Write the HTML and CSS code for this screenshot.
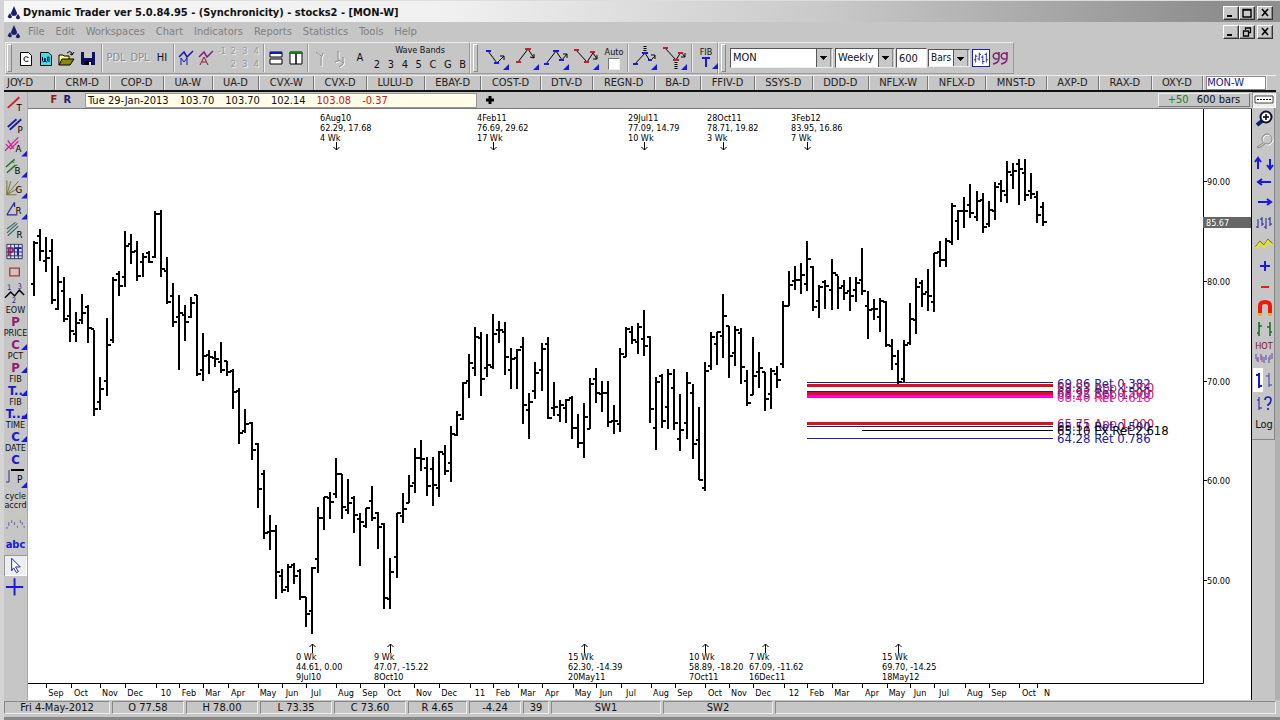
FILE: index.html
```html
<!DOCTYPE html>
<html lang="en">
<head>
	<meta charset="UTF-8">
	<title>Dynamic Trader</title>
	<link rel="stylesheet" href="styles.css">
</head>

<body>

<header class="titlebar">
	<svg class="logo" viewBox="0 0 14 14"><path d="M7 0 L10 7 Q10 10 7 10 Q4 10 4 7Z M3 7 L5 11 Q4 13 2 12 Q0 11 1 10Z M11 8 L13 11 Q13 14 10 13 Q8 12 9 11Z" fill="#1c1c70"/></svg>
	<h1>Dynamic Trader ver 5.0.84.95 - (Synchronicity) - stocks2 - [MON-W]</h1>
	<div class="winbtns">
		<button aria-label="Minimize"><svg viewBox="0 0 12 10"><path d="M2 8h5" stroke="#000" stroke-width="2"/></svg></button>
		<button aria-label="Maximize"><svg viewBox="0 0 12 10"><path d="M2 1.5h8v7.5h-8z M2 2h8" fill="none" stroke="#000" stroke-width="1.4"/></svg></button>
		<button class="close" aria-label="Close"><svg viewBox="0 0 12 10"><path d="M3 1l6 7M9 1l-6 7" stroke="#000" stroke-width="1.6"/></svg></button>
	</div>
</header>

<nav class="menubar">
	<svg class="logo" viewBox="0 0 14 14"><path d="M7 0 L10 7 Q10 10 7 10 Q4 10 4 7Z M3 7 L5 11 Q4 13 2 12 Q0 11 1 10Z M11 8 L13 11 Q13 14 10 13 Q8 12 9 11Z" fill="#1c1c70"/></svg>
	<a href="#">File</a>
	<a href="#">Edit</a>
	<a href="#">Workspaces</a>
	<a href="#">Chart</a>
	<a href="#">Indicators</a>
	<a href="#">Reports</a>
	<a href="#">Statistics</a>
	<a href="#">Tools</a>
	<a href="#">Help</a>
	<div class="winbtns">
		<button aria-label="Minimize chart"><svg viewBox="0 0 12 10"><path d="M2 8h5" stroke="#000" stroke-width="2"/></svg></button>
		<button aria-label="Restore chart"><svg viewBox="0 0 12 10"><path d="M4.5 3V1h5v4.5h-2M2.5 4h5v5h-5z" fill="none" stroke="#000" stroke-width="1.3"/></svg></button>
		<button class="close" aria-label="Close chart"><svg viewBox="0 0 12 10"><path d="M3 1l6 7M9 1l-6 7" stroke="#000" stroke-width="1.6"/></svg></button>
	</div>
</nav>

<div class="toolbar">
	<div class="band band-main">
		<button class="w20" aria-label="New chart"><svg viewBox="0 0 20 20"><path d="M4.500 4.500h8l3 3v10h-11z" fill="#fff" stroke="#000"/><path d="M12.500 9.500q-4.500-2-4.500 1.500t4.500 2" fill="none" stroke="#000"/></svg></button>
		<button class="w20" aria-label="New workspace"><svg viewBox="0 0 20 20"><path d="M4.500 4.500h8l3 3v10h-11z" fill="#3fe0e0" stroke="#000"/><path d="M6.500 9v4q1.500 2 2.500 0v-3v3q1.500 2 2.500 0V9h1.500v5" fill="none" stroke="#005"/></svg></button>
		<button class="w20" aria-label="Open"><svg viewBox="0 0 20 20"><path d="M3 17V7h4l1 1h5v3" fill="#ff7" stroke="#000"/><path d="M3 17l3-6h12l-4 6z" fill="#8a8a10" stroke="#000"/><path d="M11 5q3-3 5 0v2M18 4l-2 3-2-1" fill="none" stroke="#000"/></svg></button>
		<button class="w24" aria-label="Save"><svg viewBox="0 0 20 20"><path d="M3 4h14v13H4l-1-1z" fill="#101060"/><path d="M6 4h8v6H6z" fill="#c8c8c8"/><path d="M7 13h7v4H7z" fill="#000"/><path d="M11 14h2v3h-2z" fill="#ddd"/></svg></button>
		<i class="sep"></i>
		<button class="w24 off">PDL</button>
		<button class="w24 off">DPL</button>
		<button class="w20">HI</button>
		<i class="sep"></i>
		<button class="w20" aria-label="Monthly wave"><svg viewBox="0 0 20 20"><path d="M3 9l5-5 3 5 6-6" fill="none" stroke="#1818b0" stroke-width="1.5"/><path d="M5 17v-7l3 4 3-4v7" fill="none" stroke="#1818b0"/></svg></button>
		<button class="w20" aria-label="Average wave"><svg viewBox="0 0 20 20"><path d="M3 9l5-5 3 5 6-6" fill="none" stroke="#802080" stroke-width="1.5"/><path d="M4 17l4-8 4 8M6 14h4" fill="none" stroke="#a01030"/></svg></button>
		<div class="digits"><span>-1</span><span>2</span><span>3</span><span>4</span><span></span><span>2</span><span>3</span><span>4</span></div>
		<i class="sep"></i>
		<button class="w20" aria-label="Tile horizontally"><svg viewBox="0 0 20 20"><path d="M4 4h12v5H4zM4 11h12v5H4z" fill="#fff" stroke="#000"/><path d="M4 4h12v2H4z" fill="#1818c0"/></svg></button>
		<button class="w20" aria-label="Tile vertically"><svg viewBox="0 0 20 20"><path d="M4 4h6v12H4zM10 4h6v12h-6z" fill="#fff" stroke="#000"/><path d="M4 4h12v2H4z" fill="#108010"/></svg></button>
		<i class="sep"></i>
		<button class="w20" aria-label="Swing up"><svg viewBox="0 0 20 20"><path d="M6 4l5 4M13 5l-2 5v8" fill="none" stroke="#fff" transform="translate(1 1)"/><path d="M6 4l5 4M13 5l-2 5v8" fill="none" stroke="#8c8c8c"/></svg></button>
		<button class="w20" aria-label="Swing down"><svg viewBox="0 0 20 20"><path d="M8 3v9l6 3M5 14l5-2M13 9v7l-4 3" fill="none" stroke="#fff" transform="translate(1 1)"/><path d="M8 3v9l6 3M5 14l5-2M13 9v7l-4 3" fill="none" stroke="#8c8c8c"/></svg></button>
		<button class="w20">A</button>
		<div class="wave">
			<span>Wave Bands</span>
			<div><button>2</button><button>3</button><button>4</button><button>5</button><button>C</button><button>G</button><button>B</button></div>
		</div>
	</div>

	<div class="band band-draw">
		<button class="w30" aria-label="Retracement low"><svg viewBox="0 0 28 24"><path d="M5 5l9 12 7-7M17 10h4v4" fill="none" stroke="#000"/><path d="M3 5h5M11 17h5" stroke="#1818e0" stroke-width="2"/><path d="M26 18v6h-6z" fill="#1818e0"/></svg></button>
		<button class="w30" aria-label="Retracement high"><svg viewBox="0 0 28 24"><path d="M5 16L15 3l6 9M17 11l4 1V8" fill="none" stroke="#000"/><path d="M3 16h5M12 3h6" stroke="#c02030" stroke-width="2"/><path d="M26 18v6h-6z" fill="#1818e0"/></svg></button>
		<button class="w30" aria-label="Projection low"><svg viewBox="0 0 28 24"><path d="M3 18L13 5l6 9 5-6M20 8h4v4" fill="none" stroke="#000"/><path d="M1 18h5M10 5h6M16 14h5" stroke="#1818e0" stroke-width="2"/><path d="M26 18v6h-6z" fill="#1818e0"/></svg></button>
		<button class="w30" aria-label="Projection high"><svg viewBox="0 0 28 24"><path d="M3 4l11 12 6-9 4 6M20 13h4V9" fill="none" stroke="#000"/><path d="M1 4h5M11 16h5M17 6h5" stroke="#c02030" stroke-width="2"/><path d="M26 18v6h-6z" fill="#1818e0"/></svg></button>
		<label class="auto">Auto<input type="checkbox"></label>
		<i class="sep"></i>
		<button class="w30" aria-label="Extension up"><svg viewBox="0 0 28 24"><path d="M4 18L14 7l5 8 5-5M20 9h4v4" fill="none" stroke="#000"/><path d="M14 0v6" stroke="#000" stroke-width="3" stroke-dasharray="1 1"/><path d="M2 18h5M11 7h6M17 14h4" stroke="#1818e0" stroke-width="2"/><path d="M26 18v6h-6z" fill="#1818e0"/></svg></button>
		<button class="w30" aria-label="Extension down"><svg viewBox="0 0 28 24"><path d="M4 2l11 12 5-8 4 5M20 11h4V7" fill="none" stroke="#000"/><path d="M15 16v7" stroke="#000" stroke-width="3" stroke-dasharray="1 1"/><path d="M2 2h5M12 14h6M17 7h5" stroke="#c02030" stroke-width="2"/><path d="M26 18v6h-6z" fill="#1818e0"/></svg></button>
		<i class="sep"></i>
		<button class="w24 fib">FIB<svg viewBox="0 0 24 12"><path d="M8 1h8M12 1v9" stroke="#1818e0" stroke-width="2"/><path d="M24 6v6h-6z" fill="#1818e0"/></svg></button>
	</div>

	<div class="band band-symbol">
		<select class="symbol" aria-label="Symbol"><option>MON</option></select>
		<select class="period" aria-label="Period"><option>Weekly</option></select>
		<input class="count" type="text" value="600" aria-label="Count">
		<select class="unit" aria-label="Unit"><option>Bars</option></select>
		<button class="bars-btn" aria-label="Bar chart"><svg viewBox="0 0 18 18"><path d="M3 5v9M1 11h2M3 7h2M7 3v9M5 10h2M7 5h2M11 6v10M9 8h2M11 13h2M15 3v11M13 5h2M15 11h2" stroke="#1c1c90" fill="none"/></svg></button>
		<button class="quote-btn" aria-label="Quotes"><svg viewBox="0 0 18 18"><path d="M8 6a3 3 0 1 0-1 3.5M8 3v6q0 5-6 6M16 6a3 3 0 1 0-1 3.5M16 3v6q0 5-6 6" fill="none" stroke="#802070" stroke-width="1.5"/></svg></button>
	</div>
</div>

<nav class="tabs">
	<a href="#">JOY-D</a>
	<a href="#">CRM-D</a>
	<a href="#">COP-D</a>
	<a href="#">UA-W</a>
	<a href="#">UA-D</a>
	<a href="#">CVX-W</a>
	<a href="#">CVX-D</a>
	<a href="#">LULU-D</a>
	<a href="#">EBAY-D</a>
	<a href="#">COST-D</a>
	<a href="#">DTV-D</a>
	<a href="#">REGN-D</a>
	<a href="#">BA-D</a>
	<a href="#">FFIV-D</a>
	<a href="#">SSYS-D</a>
	<a href="#">DDD-D</a>
	<a href="#">NFLX-W</a>
	<a href="#">NFLX-D</a>
	<a href="#">MNST-D</a>
	<a href="#">AXP-D</a>
	<a href="#">RAX-D</a>
	<a href="#">OXY-D</a>
	<a href="#" class="active">MON-W</a>
</nav>

<div class="main">
	<div class="side left">
		<button aria-label="Trend line"><svg viewBox="0 0 24 21"><path d="M4 14L16 3" stroke="#d02030" stroke-width="2"/><text x="13" y="17">T</text></svg></button>
		<button aria-label="Parallel lines"><svg viewBox="0 0 24 21"><path d="M4 12l9-8M6 15L18 4" stroke="#2020a0" stroke-width="2"/><text x="14" y="18">P</text></svg></button>
		<button aria-label="Andrews pitchfork"><svg viewBox="0 0 24 21"><path d="M1 15L15 1M2 8l5 5 8-8M4 4l6 9" fill="none" stroke="#d020a0" stroke-width="1.4"/><text x="12" y="16">A</text><path d="M24 15v6h-6z" fill="#1818e0"/></svg></button>
		<button aria-label="Bands"><svg viewBox="0 0 24 21"><path d="M2 10l9-8M3 16l9-8" stroke="#207030" stroke-width="1.5"/><path d="M9 5h3M12 8h3" stroke="#207030" stroke-dasharray="2 1"/><text x="11" y="17">B</text><path d="M24 15v6h-6z" fill="#1818e0"/></svg></button>
		<button aria-label="Gann fan"><svg viewBox="0 0 24 21"><path d="M3 2v15h10M3 17L7 3M3 17L15 3M3 17l12-7" fill="none" stroke="#76762a"/><text x="12" y="15">G</text><path d="M24 15v6h-6z" fill="#1818e0"/></svg></button>
		<button aria-label="Speed lines"><svg viewBox="0 0 24 21"><path d="M3 16L11 3M3 16h11M11 3v5" fill="none" stroke="#2828a0" stroke-width="1.3"/><text x="12" y="15">R</text><path d="M24 15v6h-6z" fill="#1818e0"/></svg></button>
		<button aria-label="Regression"><svg viewBox="0 0 24 21"><path d="M3 9l9-7M3 13L14 3M4 16L15 6" stroke="#386868" stroke-width="1.2"/><text x="13" y="18">R</text></svg></button>
		<button aria-label="Price time grid"><svg viewBox="0 0 24 21"><path d="M3 3h16v15H3zM7 3v15M11 3v15M15 3v15M3 7h16M3 11h16M3 15h16" fill="#dde" stroke="#303060"/><path d="M5 15V7h3q3 2 0 4H5" fill="none" stroke="#902060" stroke-width="2"/><path d="M11 7h7M14.500 7v8" stroke="#1818d0" stroke-width="2"/></svg></button>
		<button aria-label="Rectangle"><svg viewBox="0 0 24 21"><path d="M6 6h10v8H6z" fill="none" stroke="#c03030" stroke-width="1.4"/></svg></button>
		<button aria-label="Wave count"><svg viewBox="0 0 24 21"><path d="M1 15l6-6 4 4 5-6 5 5" fill="none" stroke="#000" stroke-width="1.500"/><g class="tiny"><text x="3" y="7">1</text><text x="8" y="20">2</text><text x="14" y="6">3</text></g></svg></button>
		<button class="stack"><span>EOW</span><b class="purple">P</b></button>
		<button class="stack corner"><span>PRICE</span><b class="purple">C</b></button>
		<button class="stack corner"><span>PCT</span><b class="purple">P</b></button>
		<button class="stack corner"><span>FIB</span><b>T..</b></button>
		<button class="stack corner"><span>FIB</span><b>T...</b></button>
		<button class="stack corner"><span>TIME</span><b>C</b></button>
		<button class="stack"><span>DATE</span><b>C</b></button>
		<button class="stack corner" aria-label="Root price"><svg viewBox="0 0 24 21"><path d="M2 16h3V4" fill="none" stroke="#303080"/><path d="M7 4h13" stroke="#000" stroke-width="2"/><text x="13" y="17">P</text></svg></button>
		<button class="stack cycle"><span>cycle</span><span>accrd</span></button>
		<button aria-label="Cycle dots"><svg viewBox="0 0 24 21"><path d="M3 14v2M5 9v4M8 7v3M11 9v3M14 13v2M17 7v3M19 9v3M21 13v2" stroke="#6060b0"/><path d="M3 7l3-3M11 5h3M17 4l3 2" stroke="#d0d060"/></svg></button>
		<button class="abc">abc</button>
		<button class="pressed" aria-label="Pointer"><svg viewBox="0 0 24 21"><path d="M8 3l9 9h-5l3 5-2 1-3-5-2 3z" fill="#fff" stroke="#2020a0"/></svg></button>
		<button aria-label="Crosshair"><svg viewBox="0 0 24 21"><path d="M11 2v18M2 11h18" stroke="#1818e0" stroke-width="2"/></svg></button>
	</div>

	<div class="center">
		<div class="info">
			<div class="fr"><b class="f">F</b><b class="r">R</b></div>
			<div class="quote">
				<span>Tue 29-Jan-2013</span><span>103.70</span><span>103.70</span><span>102.14</span><span class="red">103.08</span><span class="red">-0.37</span>
			</div>
			<svg class="plus" viewBox="0 0 10 10"><path d="M5 1v8M1 5h8" stroke="#000" stroke-width="3"/></svg>
			<div class="barcount"><span class="green">+50</span><span>600 bars</span></div>
		</div>
		<svg class="chart" id="chart" viewBox="28 109 1224 591" preserveAspectRatio="xMinYMin meet">
			<path class="axis" d="M28 683.5H1203.5M1203.5 109V683.5M1251.5 109V700"/>
		</svg>
	</div>

	<div class="side right">
		<div class="tools">
			<button class="pressed top" aria-label="Line style"><svg viewBox="0 0 24 16"><path d="M3 4h18v7H3z" fill="#fff" stroke="#444"/><path d="M5 7.5h14" stroke="#000" stroke-dasharray="2 1"/></svg></button>
			<button aria-label="Zoom in"><svg viewBox="0 0 24 21"><path d="M10 13l-5 4" stroke="#102070" stroke-width="4"/><circle cx="14" cy="9" r="5.500" fill="#fff" stroke="#101030" stroke-width="2"/><path d="M14 6v6M11 9h6" stroke="#000" stroke-width="1.500"/></svg></button>
			<button aria-label="Zoom out"><svg viewBox="0 0 24 21"><circle cx="16" cy="11" r="5" fill="none" stroke="#fff"/><circle cx="15" cy="10" r="5" fill="none" stroke="#888"/><path d="M11 14l-6 4 2 1 6-4" fill="none" stroke="#888"/></svg></button>
			<button aria-label="Scale"><svg viewBox="0 0 24 21"><path d="M6 19V9M3 12l3-4 3 4M18 9v9M15 15l3 4 3-4" fill="none" stroke="#1818e0" stroke-width="2"/></svg></button>
			<button aria-label="Scroll left"><svg viewBox="0 0 24 21"><path d="M6 11h13M10 8l-4 3 4 3" fill="none" stroke="#1818e0" stroke-width="2"/></svg></button>
			<button aria-label="Scroll right"><svg viewBox="0 0 24 21"><path d="M6 10h13M15 7l4 3-4 3" fill="none" stroke="#1818e0" stroke-width="2"/></svg></button>
			<button aria-label="Bars"><svg viewBox="0 0 24 21"><path d="M6 6v9M4 14h2M10 4v9M8 6h2M10 11h2M14 5v11M12 14h2M18 4v9M16 6h2M18 11h2" stroke="#2020a0"/></svg></button>
			<button aria-label="Line"><svg viewBox="0 0 24 21"><path d="M4 13l4-5 4 4 4-6 4 4" fill="none" stroke="#555" stroke-width="2"/><path d="M4 14l4-5 4 4 4-6 4 4" fill="none" stroke="#ee0" stroke-width="2"/></svg></button>
			<button aria-label="Widen"><svg viewBox="0 0 24 21"><path d="M13 6v10M8 11h10" stroke="#1818e0" stroke-width="2"/></svg></button>
			<button aria-label="Narrow"><svg viewBox="0 0 24 21"><path d="M9 11h8" stroke="#e02020" stroke-width="2"/></svg></button>
			<button aria-label="Magnet"><svg viewBox="0 0 24 21"><path d="M8 16V9q0-4 5-4t5 4v7" fill="none" stroke="#f01808" stroke-width="4"/><path d="M6 16h4v3H6zM16 16h4v3h-4z" fill="#e8b020"/></svg></button>
			<button aria-label="Compare bars"><svg viewBox="0 0 24 21"><path d="M7 4v14M5 15h2M7 8h3M18 4v14M15 9h3M18 14h2" stroke="#187028" stroke-width="1.600"/></svg></button>
			<button class="hot">HOT<svg viewBox="0 0 24 14"><path d="M4 3v5M6 6v5M9 3v6M12 6v6M14 4v5M17 6v6M20 2v6" stroke="#4848c0"/><path d="M5 7v3M10 5v6M18 4v5" stroke="#c04060"/></svg></button>
			<button class="tall" aria-label="Single bar"><svg viewBox="0 0 24 26"><path d="M1 1h10v24H1z" fill="#fff"/><path d="M7 6v15M4 8h3M7 19h3" stroke="#1818e0" stroke-width="2"/><path d="M17 6v14M14 9h3M17 18h3" stroke="#4040b0"/></svg></button>
			<button aria-label="Bar help"><svg viewBox="0 0 24 21"><path d="M7 4v13M5 7h2M7 15h3" stroke="#1818b0"/><path d="M13 7q0-3 3-3t3 3-3 5v1M16 15v2" fill="none" stroke="#2020b0" stroke-width="1.600"/></svg></button>
			<button class="log">Log</button>
		</div>
	</div>
</div>

<footer class="status">
	<span class="date">Fri 4-May-2012</span>
	<span class="val">O 77.58</span>
	<span class="val">H 78.00</span>
	<span class="val">L 73.35</span>
	<span class="val">C 73.60</span>
	<span class="range">R 4.65</span>
	<span class="chg">-4.24</span>
	<span class="num">39</span>
	<span class="sw">SW1</span>
	<span class="sw">SW2</span>
	<span class="rest"></span>
</footer>

<script src="chart.js"></script>
</body>
</html>
```
FILE: styles.css
```css
*{ margin: 0; padding: 0; box-sizing: border-box;}
body{ min-height: 100vh; display: flex; flex-direction: column; background: #c6c6c6; color: #111; font: 11px/14px "DejaVu Sans Condensed", "Noto Sans", sans-serif; border-left: 4px solid #d4d4d4; overflow-x: hidden;}
button{ border: none; background: none; font: inherit; color: inherit; display: flex; align-items: center; justify-content: center;}
a{ color: inherit; text-decoration: none;}
svg{ display: block;}

/* title and menu */
.titlebar{ height: 22px; display: flex; align-items: center; padding: 2px 4px 0 3px; border-top: 1px solid #ddd; background: linear-gradient(to right, #f6f6f6 0, #f0f0f0 35%, #c8c8c8 65%, #8e8e8e 95%);}
.titlebar h1{ font-size: 11px; font-weight: bold; margin-left: 2px; white-space: nowrap;}
.logo{ width: 14px; height: 14px; flex: none;}
.menubar{ height: 20px; display: flex; align-items: center; padding: 0 4px 0 3px; gap: 11px; color: #808080;}
.menubar .logo{ margin-right: -4px;}
.winbtns{ display: flex; margin-left: auto; padding-right: 3px;}
.winbtns button{ width: 16px; height: 14px; background: #c8c8c8; border: 1px solid; border-color: #fff #333 #333 #fff; box-shadow: inset -1px -1px #888;}
.winbtns .close{ margin-left: 2px;}
.winbtns svg{ width: 12px; height: 10px;}

/* toolbar */
.toolbar{ height: 32px; display: flex; margin-left: 1px;}
.band{ display: flex; align-items: center; border: 1px solid; border-color: #eee #999 #999 #eee;}
.band::before{ content: ""; flex: none; width: 3px; height: 26px; border: 1px solid; border-color: #fff #888 #888 #fff; margin-right: 4px;}
.band-main{ width: 465px; padding-left: 1px;}
.band-draw{ width: 248px; padding-left: 2px;}
.band-symbol{ width: 296px; padding-left: 2px;}
.band button{ flex: none;}
.band .w20{ width: 20px;}
.band .w24{ width: 24px;}
.band .w30{ width: 30px;}
.w20 svg, .w24 > svg{ width: 20px; height: 20px;}
.w30 svg{ width: 28px; height: 24px;}
.sep{ flex: none; width: 2px; height: 28px; margin: 0 1px; border-left: 1px solid #999; border-right: 1px solid #eee;}
.off{ color: #8c8c8c; text-shadow: 1px 1px #eee;}
.digits{ width: 46px; flex: none; display: grid; grid-template-columns: repeat(4, 1fr); text-align: center; font-size: 9px; color: #999; text-shadow: 1px 1px #eee; line-height: 13px;}
.wave{ font-size: 9px; line-height: 13px; text-align: center; width: 100px; flex: none;}
.wave div{ display: flex; justify-content: space-around; line-height: 16px; font-size: 11px;}
.auto{ display: flex; flex-direction: column; align-items: center; width: 24px; font-size: 9px; line-height: 12px; flex: none;}
.auto input{ appearance: none; width: 12px; height: 12px; background: #fff; border: 1px solid; border-color: #777 #eee #eee #777;}
.band .fib{ flex-direction: column; font-size: 9px; line-height: 10px;}
.fib svg{ width: 24px; height: 12px;}
select, .count{ appearance: none; height: 20px; border: 1px solid; border-color: #555 #eee #eee #555; border-radius: 0; background: #fff; font: inherit; color: #111; padding: 0 2px;}
select{ background: linear-gradient(#000, #000) right 5px top 7px / 7px 1px no-repeat, linear-gradient(#000, #000) right 6px top 8px / 5px 1px no-repeat, linear-gradient(#000, #000) right 7px top 9px / 3px 1px no-repeat, linear-gradient(#000, #000) right 8px top 10px / 1px 1px no-repeat, linear-gradient(#888, #888) right 1px top / 1px 100% no-repeat, linear-gradient(#c8c8c8, #c8c8c8) right top / 15px 100% no-repeat, linear-gradient(#555, #555) right 15px top / 1px 100% no-repeat, #fff;}
.symbol{ width: 103px;}
.period{ width: 60px; margin-left: 2px;}
.count{ width: 31px; margin-left: 1px;}
.unit{ width: 42px; height: 18px; margin-left: 1px; font-size: 10px;}
.bars-btn{ width: 18px; height: 18px; margin-left: 2px; background: #fff; border: 1px solid #2020b0;}
.quote-btn{ width: 20px; height: 18px;}
.quote-btn svg{ width: 18px; height: 18px;}

/* symbol tabs */
.tabs{ display: flex; height: 17px; margin: 1px 4px 0 0; border-top: 1px solid #eee; border-bottom: 2px solid #111; padding-right: 10px;}
.tabs a{ flex: 1 1 auto; min-width: 46px; text-align: center; line-height: 14px; border-right: 1px solid #777; box-shadow: 1px 0 #eee; color: #222;}
.tabs a:first-child{ text-align: left; padding-left: 3px;}
.tabs .active{ background: #fff; color: #202080; margin-left: 3px; border: 1px solid #888; line-height: 12px; text-align: left;}

/* work area */
.main{ flex: 1; display: flex;}
.side{ flex: none; display: flex; flex-direction: column;}
.left{ width: 24px; padding-top: 2px; border-right: 1px solid #aaa;}
.side button{ width: 24px; height: 21px; flex: none; position: relative;}
.left button{ width: 23px;}
.side svg{ width: 24px; height: 21px;}
.side svg text{ font-size: 10px;}
.side .tiny text{ font-size: 8px; fill: #2020b0;}
.side .stack{ height: 23px; flex-direction: column; font-size: 9px; line-height: 11px;}
.stack b{ font-size: 13px; color: #1818d0;}
.stack .purple{ color: #902070;}
.corner::after{ content: ""; position: absolute; right: 0; bottom: 0; border: 3px solid; border-color: transparent #1818e0 #1818e0 transparent;}
.side .cycle{ height: 25px; line-height: 9px;}
.side .abc{ color: #1818e0; font-weight: bold;}
.pressed{ background: #eee; box-shadow: inset 1px 1px #999, inset -1px -1px #fff;}
.right{ width: 28px; border-right: 5px solid #b0b0b0;}
.tools{ width: 23px; padding-bottom: 4px; border-right: 1px solid #888; border-bottom: 1px solid #888;}
.right .top{ height: 16px;}
.right .top svg{ height: 16px;}
.side .hot{ height: 28px; flex-direction: column; font-size: 9px; line-height: 10px; color: #801818;}
.side .hot svg{ height: 14px;}
.side .tall, .side .tall svg{ height: 26px;}

.center{ flex: 1; display: flex; flex-direction: column; min-width: 0;}
.info{ height: 17px; display: flex; align-items: center; padding: 1px 2px 1px 0; border-bottom: 1px solid #777;}
.fr{ width: 57px; display: flex; justify-content: flex-end; gap: 6px; padding-right: 14px;}
.f{ color: #901818;}
.r{ color: #181870;}
.quote{ width: 392px; display: flex; gap: 11px; padding: 0 2px; background: #fffde8; border: 1px solid #999; line-height: 13px; white-space: nowrap;}
.red{ color: #b82020;}
.green{ color: #208020;}
.plus{ width: 10px; height: 10px; margin-left: 8px;}
.barcount{ margin-left: auto; width: 92px; display: flex; gap: 8px; justify-content: center; border: 1px solid; border-color: #eee #777 #777 #eee; line-height: 12px;}
.chart{ width: 100%; flex: 1; background: #fff;}
.axis{ fill: none; stroke: #000;}
.bars{ fill: none; stroke: #000; stroke-width: 2;}
.note, .month, .price{ font-size: 9px; fill: #000;}
.month{ text-anchor: middle;}
.level{ font-size: 13px;}
.arrow{ fill: none; stroke: #000;}
.last-box{ fill: #666;}
.last{ font-size: 9px; fill: #fff;}

/* status bar */
.status{ height: 20px; display: flex; padding: 1px 4px 3px 0; gap: 2px; border-bottom: 3px solid #888;}
.status span{ text-align: center; border: 1px solid; border-color: #888 #eee #eee #888; line-height: 12px;}
.date{ width: 106px;}
.val{ width: 72px;}
.range{ width: 59px;}
.chg{ width: 52px;}
.num{ width: 26px;}
.sw{ width: 110px;}
.rest{ flex: 1;}
```
FILE: chart.js
```js
var NS = 'http://www.w3.org/2000/svg';
var chart = document.getElementById('chart');

//x, high, low, open, close
var bars = [
	[34,241,296,284,243],[40,229,261,236,251],[46,237,272,261,258],[52,239,304,251,300],[58,266,310,309,282],
	[64,277,322,291,319],[70,298,342,316,331],[76,312,342,334,323],[82,294,324,320,313],[88,305,343,307,328],
	[94,330,416,329,409],[100,377,410,402,389],[107,318,396,381,345],[113,277,343,340,280],[119,271,296,274,286],
	[125,231,287,277,246],[131,234,264,244,252],[137,241,281,251,276],[143,253,277,262,257],[149,251,263,253,262],
	[155,211,258,257,214],[161,210,277,214,269],[167,257,304,271,302],[173,283,327,296,322],[179,295,370,317,313],
	[185,305,341,315,322],[191,297,318,317,303],[197,295,376,295,374],[203,333,381,370,356],[209,350,374,355,357],
	[215,351,367,358,359],[221,342,373,362,370],[227,361,376,361,372],[233,369,409,371,392],[239,388,444,391,433],
	[245,409,433,431,424],[252,422,460,423,450],[258,443,508,444,489],[264,470,539,474,533],[270,515,550,532,531],
	[276,525,599,531,572],[282,569,593,576,590],[288,564,592,587,567],[294,563,584,565,576],[300,569,600,571,597],
	[306,597,627,597,614],[312,567,634,611,568],[318,507,573,559,518],[324,497,530,518,497],[330,492,519,498,502],
	[336,458,498,494,474],[342,474,519,474,507],[348,479,514,510,503],[354,496,533,498,515],[360,513,566,519,522],
	[366,508,528,526,508],[372,486,521,501,518],[378,512,549,513,527],[384,523,609,524,598],[390,558,609,599,572],
	[397,513,578,557,513],[403,493,523,516,509],[409,475,503,503,486],[415,448,493,483,458],[421,440,471,458,459],
	[427,457,496,468,486],[433,457,506,469,485],[439,451,497,488,452],[445,445,475,454,471],[451,426,482,463,434],
	[457,411,436,435,415],[463,382,420,419,383],[469,354,398,381,363],[475,327,376,368,337],[481,332,396,338,379],
	[487,334,377,368,365],[493,314,369,367,334],[499,321,343,330,330],[505,322,375,332,357],[511,348,389,370,359],
	[517,349,389,358,350],[523,337,424,347,405],[529,393,439,410,402],[535,362,399,391,373],[542,343,391,370,349],
	[548,337,419,344,418],[554,382,416,408,407],[560,400,422,415,405],[566,399,423,408,400],[572,396,439,398,428],
	[578,414,448,428,443],[584,403,458,443,417],[590,378,429,429,384],[596,368,403,379,393],[602,381,412,394,393],
	[608,381,427,393,422],[614,405,434,421,421],[620,348,432,424,354],[626,327,357,357,329],[632,326,344,332,340],
	[638,323,354,342,327],[644,310,356,339,346],[650,336,423,337,409],[656,377,450,428,382],[662,374,428,376,421],
	[668,369,429,407,374],[674,369,430,388,423],[680,394,451,439,430],[687,372,439,423,383],[693,384,459,393,444],
	[699,407,480,440,480],[705,362,491,488,371],[711,332,370,366,337],[717,332,365,344,332],[723,294,358,336,316],
	[729,326,378,326,356],[735,326,366,353,330],[741,328,384,333,367],[747,370,406,381,403],[753,337,395,395,376],
	[759,352,388,372,368],[765,372,411,372,399],[771,368,409,394,371],[777,366,388,374,380],[783,301,368,364,306],
	[789,271,306,306,285],[795,266,290,281,280],[801,263,294,280,275],[807,241,291,284,259],[813,266,311,267,307],
	[819,285,318,301,287],[825,280,309,282,286],[832,259,310,290,273],[838,276,309,275,288],[844,280,300,286,293],
	[850,277,311,291,296],[856,277,302,290,283],[862,248,295,280,291],[868,291,339,306,310],[874,299,320,309,309],
	[880,298,332,317,301],[886,301,347,302,345],[892,339,370,346,356],[898,350,384,364,382],[904,340,382,379,345],
	[910,303,345,343,319],[916,278,334,320,287],[922,280,307,283,294],[928,269,311,292,296],[934,253,312,302,253],
	[940,241,267,252,260],[946,238,267,260,241],[952,203,245,242,206],[958,210,240,221,211],[964,197,228,211,211],
	[970,184,218,205,213],[977,191,221,217,201],[983,193,233,200,227],[989,201,227,224,210],[995,182,220,211,187],
	[1001,180,202,184,191],[1007,161,203,195,172],[1013,163,189,175,171],[1019,159,205,164,169],[1025,159,201,173,195],
	[1031,173,199,191,194],[1037,191,223,197,215],[1043,202,226,207,222]
];

//x of the pivot, three lines of text
var tops = [
	[336,'6Aug10','62.29, 17.68','4 Wk'],
	[493,'4Feb11','76.69, 29.62','17 Wk'],
	[644,'29Jul11','77.09, 14.79','10 Wk'],
	[723,'28Oct11','78.71, 19.82','3 Wk'],
	[807,'3Feb12','83.95, 16.86','7 Wk']
];
var bottoms = [
	[312,'0 Wk','44.61, 0.00','9Jul10'],
	[390,'9 Wk','47.07, -15.22','8Oct10'],
	[584,'15 Wk','62.30, -14.39','20May11'],
	[705,'10 Wk','58.89, -18.20','7Oct11'],
	[765,'7 Wk','67.09, -11.62','16Dec11'],
	[898,'15 Wk','69.70, -14.25','18May12']
];

//tick x, label
var months = [
	[46,'Sep'],[71,'Oct'],[100,'Nov'],[125,'Dec'],[156,'10'],[179,'Feb'],[203,'Mar'],[228,'Apr'],[258,'May'],[282,'Jun'],
	[306,'Jul'],[336,'Aug'],[360,'Sep'],[384,'Oct'],[414,'Nov'],[439,'Dec'],[470,'11'],[493,'Feb'],[518,'Mar'],[542,'Apr'],
	[573,'May'],[596,'Jun'],[621,'Jul'],[651,'Aug'],[675,'Sep'],[705,'Oct'],[729,'Nov'],[753,'Dec'],[784,'12'],[807,'Feb'],
	[832,'Mar'],[862,'Apr'],[887,'May'],[910,'Jun'],[934,'Jul'],[965,'Aug'],[989,'Sep'],[1019,'Oct'],[1037,'N']
];

//start x, y, thickness, colour
var lines = [
	[807,382,1,'#202070'],[807,385,3,'#d81020'],[807,391,1,'#202070'],[807,393,3,'#d81020'],[807,396,3,'#ff00e0'],
	[807,423,3,'#d81020'],[807,426,1,'#202070'],[862,430,1,'#000'],[807,438,1,'#2020a0']
];
//baseline, label, colour
var levels = [
	[388,'69.86 Ret 0.382','#2020a0'],
	[392,'69.53 App 1.000','#c02050'],
	[397,'68.92 Ret 0.500','#2020a0'],
	[399,'68.75 App 1.000','#c02050'],
	[402,'68.40 Ret 0.618','#e020b0'],
	[428,'65.75 App 1.000','#c02050'],
	[431,'65.51 Ret 0.500','#2020a0'],
	[435,'65.10 Ex Ret 2.618','#000'],
	[443,'64.28 Ret 0.786','#2020a0']
];

function add(tag, attrs, text){
	var el = document.createElementNS(NS, tag);
	for(var k in attrs){
		el.setAttribute(k, attrs[k]);
	}
	if(text){ el.textContent = text; }
	chart.appendChild(el);
}

var d = '';
for(var i=0;i<bars.length;i++){
	var b = bars[i];
	d += 'M'+b[0]+' '+b[1]+'V'+b[2]+'M'+(b[0]-3)+' '+b[3]+'H'+b[0]+'M'+b[0]+' '+b[4]+'H'+(b[0]+4);
}

lines.forEach(function(l){
	add('path', {d:'M'+l[0]+' '+(l[1]+0.5)+'H1053', stroke:l[3], 'stroke-width':l[2]});
});
add('path', {'class':'bars', d:d});
levels.forEach(function(l){
	add('text', {'class':'level', x:1057, y:l[0], fill:l[2]}, l[1]);
});

//pivots above and below the bars
tops.forEach(function(t){
	for(var i=1;i<4;i++){
		add('text', {'class':'note', x:t[0]-16, y:111+i*10}, t[i]);
	}
	add('path', {'class':'arrow', d:'M'+(t[0]+0.5)+' 142v8m-3 -3l3 3l3 -3'});
});
bottoms.forEach(function(t){
	for(var i=1;i<4;i++){
		add('text', {'class':'note', x:t[0]-16, y:650+i*10}, t[i]);
	}
	add('path', {'class':'arrow', d:'M'+(t[0]+0.5)+' 653v-9m-3 3l3 -3l3 3'});
});

//time scale
months.forEach(function(m){
	add('path', {'class':'axis', d:'M'+(m[0]+0.5)+' 684v4'});
	add('text', {'class':'month', x:m[0]+10, y:696}, m[1]);
});

//price scale
for(var p=0;p<5;p++){
	var y = 181 + Math.round(p*99.8);
	add('path', {'class':'axis', d:'M1203 '+(y+0.5)+'h4'});
	add('text', {'class':'price', x:1207, y:y+4}, (90-p*10)+'.00');
}
add('rect', {'class':'last-box', x:1203, y:217, width:48, height:11});
add('text', {'class':'last', x:1206, y:226}, '85.67');
```
